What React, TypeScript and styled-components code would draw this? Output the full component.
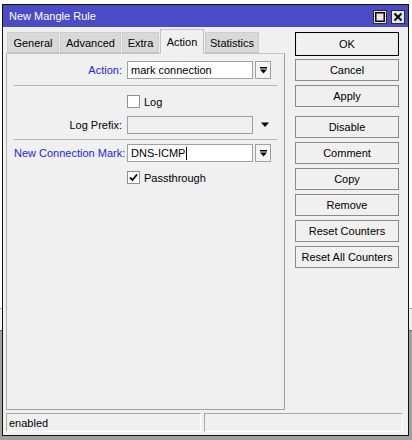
import styled, { createGlobalStyle } from "styled-components"

const GlobalStyle = createGlobalStyle`
  html, body {
    margin: 0;
    padding: 0;
  }
  body {
    width: 412px;
    height: 440px;
    overflow: hidden;
    font-family: "Liberation Sans", Arial, sans-serif;
    font-size: 11px;
    background:
      linear-gradient(to bottom,
        #ffffff 0px, #ffffff 308px,
        #a8a8a8 308px, #a8a8a8 309px,
        #f0f0f0 309px, #f0f0f0 330px,
        #696969 330px, #696969 331px,
        #a0a0a0 331px, #a0a0a0 440px);
  }
  #root {
    padding: 4px 0 0 2px;
  }
`

const Window = styled.div`
  width: 405px;
  border: 1px solid #111;
  background: #f0f0f0;
  display: flex;
  flex-direction: column;
`

const TitleBar = styled.div`
  height: 22px;
  background: #4b4bc8;
  display: flex;
  align-items: center;
  justify-content: space-between;
  padding: 0 3px 0 6px;
`

const Title = styled.span`
  color: #fff;
  font-size: 11px;
`

const TitleButtons = styled.div`
  display: flex;
  gap: 4px;
  margin-top: 1px;
`

const TitleButton = styled.div`
  width: 12px;
  height: 12px;
  border: 1px solid #2a2a2a;
  background: #e6e6e6;
  display: flex;
  align-items: center;
  justify-content: center;
`

const Body = styled.div`
  display: flex;
  padding: 1px 7px 0 3px;
  gap: 10px;
`

const LeftSide = styled.div`
  width: 279px;
  display: flex;
  flex-direction: column;
`

const TabRow = styled.div`
  display: flex;
  height: 25px;
  align-items: flex-end;
  gap: 1px;
  padding-left: 1px;
`

const Tab = styled.div<{ $active?: boolean; $width: number }>`
  width: ${(p) => p.$width}px;
  height: ${(p) => (p.$active ? 25 : 21)}px;
  display: flex;
  align-items: center;
  justify-content: center;
  box-sizing: border-box;
  background: ${(p) => (p.$active ? "#f0f0f0" : "#d9d9d9")};
  border: 1px solid ${(p) => (p.$active ? "#c4c4c4" : "#cdcdcd")};
  border-bottom: ${(p) => (p.$active ? "none" : "1px solid #c4c4c4")};
  color: #000;
  margin-bottom: ${(p) => (p.$active ? -1 : 0)}px;
  position: relative;
  z-index: ${(p) => (p.$active ? 1 : 0)};
`

const Panel = styled.div`
  height: 357px;
  box-sizing: border-box;
  border: 1px solid #a0a0a0;
  border-top-color: #c4c4c4;
  border-left-color: #b0b0b0;
  padding: 7px 0 0 7px;
  display: flex;
  flex-direction: column;
`

const FieldRow = styled.div`
  display: grid;
  grid-template-columns: 108px 131px 16px;
  align-items: center;
  height: 18px;
`

const Label = styled.label<{ $blue?: boolean }>`
  text-align: right;
  color: ${(p) => (p.$blue ? "#2424e8" : "#000")};
  white-space: nowrap;
`

const Input = styled.div<{ $disabled?: boolean }>`
  margin-left: 5px;
  height: 18px;
  box-sizing: border-box;
  border: 1px solid #a0a0a0;
  background: ${(p) => (p.$disabled ? "#f0f0f0" : "#fff")};
  padding: 0 3px;
  display: flex;
  align-items: center;
  color: #000;
`

const Caret = styled.span`
  display: inline-block;
  width: 1px;
  height: 13px;
  background: #000;
  margin-left: 1px;
`

const DropButton = styled.div`
  margin-left: 2px;
  width: 16px;
  height: 18px;
  box-sizing: border-box;
  border: 1px solid #a0a0a0;
  background: #f4f4f4;
  display: flex;
  align-items: center;
  justify-content: center;
`

const Arrow = styled.div`
  margin-left: 8px;
  display: flex;
  align-items: center;
  justify-content: center;
`

const Separator = styled.div<{ $top: number; $bottom: number }>`
  height: 1px;
  width: 263px;
  background: #b4b4b4;
  margin: ${(p) => p.$top}px 0 ${(p) => p.$bottom}px 0;
`

const CheckRow = styled.div<{ $top: number; $bottom: number }>`
  display: flex;
  align-items: center;
  gap: 4px;
  padding-left: 113px;
  margin: ${(p) => p.$top}px 0 ${(p) => p.$bottom}px 0;
`

const Box = styled.div`
  width: 11px;
  height: 11px;
  border: 1px solid #8f8f8f;
  background: #fff;
  display: flex;
  align-items: center;
  justify-content: center;
`

const ButtonColumn = styled.div`
  display: flex;
  flex-direction: column;
  padding-top: 4px;
  width: 104px;
`

const Button = styled.div<{ $default?: boolean; $gap?: number }>`
  height: 22px;
  box-sizing: border-box;
  border: 1px solid ${(p) => (p.$default ? "#000" : "#8a8a8a")};
  background: #f0f0f0;
  display: flex;
  align-items: center;
  justify-content: center;
  color: #000;
  margin-bottom: ${(p) => p.$gap ?? 4}px;
  ${(p) => (p.$default ? "height: 24px; box-shadow: inset 0 0 0 1px #e8e8e8;" : "")}
`

const StatusBar = styled.div`
  display: flex;
  gap: 3px;
  padding: 3px 0 3px 3px;
`

const StatusCell = styled.div<{ $width: number }>`
  width: ${(p) => p.$width}px;
  height: 19px;
  box-sizing: border-box;
  border: 1px solid #a8a8a8;
  border-right-color: #fff;
  border-bottom-color: #fff;
  display: flex;
  align-items: center;
  padding-left: 2px;
  color: #000;
`

function DropIcon() {
  return (
    <svg width="9" height="9" viewBox="0 0 9 9">
      <rect x="1" y="1" width="7" height="1.5" fill="#000" />
      <path d="M1 3.5 L8 3.5 L4.5 7.5 Z" fill="#000" />
    </svg>
  )
}

const tabs = [
  { label: "General", width: 52 },
  { label: "Advanced", width: 61 },
  { label: "Extra", width: 37 },
  { label: "Action", width: 44 },
  { label: "Statistics", width: 54 },
]

const buttons: { label: string; gap?: number; def?: boolean }[] = [
  { label: "OK", def: true, gap: 3 },
  { label: "Cancel" },
  { label: "Apply", gap: 9 },
  { label: "Disable" },
  { label: "Comment" },
  { label: "Copy" },
  { label: "Remove" },
  { label: "Reset Counters" },
  { label: "Reset All Counters" },
]

export default function App() {
  return (
    <>
      <GlobalStyle />
      <Window>
        <TitleBar>
          <Title>New Mangle Rule</Title>
          <TitleButtons>
            <TitleButton>
              <svg width="10" height="10" viewBox="0 0 10 10">
                <rect x="0.75" y="0.75" width="8.5" height="8.5" fill="none" stroke="#000" strokeWidth="1.5" />
              </svg>
            </TitleButton>
            <TitleButton>
              <svg width="10" height="10" viewBox="0 0 10 10">
                <path d="M1.5 1.5 L8.5 8.5 M8.5 1.5 L1.5 8.5" stroke="#000" strokeWidth="2" />
              </svg>
            </TitleButton>
          </TitleButtons>
        </TitleBar>
        <Body>
          <LeftSide>
            <TabRow>
              {tabs.map((t) => (
                <Tab key={t.label} $width={t.width} $active={t.label === "Action"}>
                  {t.label}
                </Tab>
              ))}
            </TabRow>
            <Panel>
              <FieldRow>
                <Label $blue>Action:</Label>
                <Input>mark connection</Input>
                <DropButton>
                  <DropIcon />
                </DropButton>
              </FieldRow>
              <Separator $top={6} $bottom={9} />
              <CheckRow $top={0} $bottom={8}>
                <Box />
                <span>Log</span>
              </CheckRow>
              <FieldRow>
                <Label>Log Prefix:</Label>
                <Input $disabled />
                <Arrow>
                  <svg width="10" height="6" viewBox="0 0 10 6">
                    <path d="M0 0 L10 0 L5 5.5 Z" fill="#000" />
                  </svg>
                </Arrow>
              </FieldRow>
              <Separator $top={5} $bottom={4} />
              <FieldRow>
                <Label $blue>New Connection Mark:</Label>
                <Input>
                  DNS-ICMP
                  <Caret />
                </Input>
                <DropButton>
                  <DropIcon />
                </DropButton>
              </FieldRow>
              <CheckRow $top={9} $bottom={0}>
                <Box>
                  <svg width="9" height="9" viewBox="0 0 9 9">
                    <path d="M1 4.5 L3.5 7 L8 1.5" fill="none" stroke="#000" strokeWidth="1.8" />
                  </svg>
                </Box>
                <span>Passthrough</span>
              </CheckRow>
            </Panel>
          </LeftSide>
          <ButtonColumn>
            {buttons.map((b) => (
              <Button key={b.label} $default={b.def} $gap={b.gap}>
                {b.label}
              </Button>
            ))}
          </ButtonColumn>
        </Body>
        <StatusBar>
          <StatusCell $width={195}>enabled</StatusCell>
          <StatusCell $width={199} />
        </StatusBar>
      </Window>
    </>
  )
}
